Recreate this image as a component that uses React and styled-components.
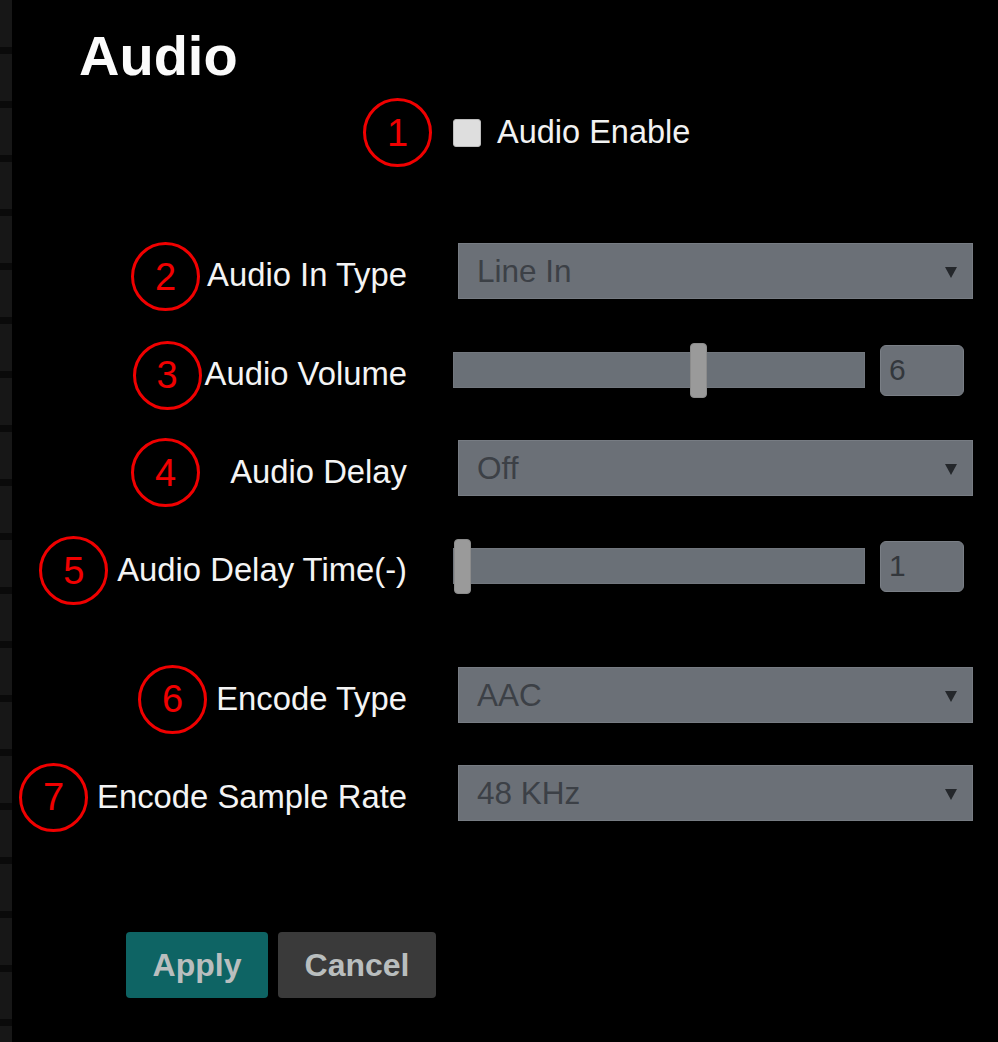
import React from "react";
import styled, { createGlobalStyle } from "styled-components";

const Global = createGlobalStyle`
  html, body { margin: 0; padding: 0; background: #000; }
  * { box-sizing: border-box; }
`;

const Page = styled.div`
  width: 998px;
  height: 1042px;
  overflow: hidden;
  padding-top: 28px;
  background:
    repeating-linear-gradient(to bottom, #171717 0 47px, #0a0a0a 47px 54px) 0 0 / 12px 100% no-repeat,
    #000;
  font-family: "Liberation Sans", Arial, sans-serif;
  color: #f2f2f2;
`;

const Title = styled.h1`
  margin: 0 0 0 79px;
  font-size: 56px;
  line-height: 56px;
  font-weight: 700;
  color: #fbfbfb;
`;

const EnableRow = styled.div`
  display: flex;
  align-items: center;
  height: 69px;
  margin-top: 14px;
  padding-left: 363px;
`;

const Marker = styled.div`
  flex: none;
  width: 69px;
  height: 69px;
  border: 3px solid #f00000;
  border-radius: 50%;
  display: flex;
  align-items: center;
  justify-content: center;
  color: #f00000;
  font-size: 38px;
  line-height: 1;
  margin-top: ${(p) => p.$dy || 0}px;
`;

const Checkbox = styled.span`
  display: inline-block;
  width: 28px;
  height: 28px;
  margin-left: 21px;
  background: #dedede;
  border: 1px solid #bdbdbd;
  border-radius: 3px;
`;

const EnableText = styled.span`
  margin-left: 16px;
  font-size: 32.5px;
`;

const Row = styled.div`
  display: flex;
  align-items: center;
  height: 56px;
  margin-top: ${(p) => p.$mt}px;
`;

const LabelCell = styled.div`
  flex: none;
  width: 407px;
  height: 56px;
  padding-top: 8px;
  display: flex;
  align-items: center;
  justify-content: flex-end;
  gap: ${(p) => p.$gap}px;
`;

const LabelText = styled.span`
  font-size: 32.8px;
  white-space: nowrap;
  color: #f4f4f4;
`;

const Select = styled.div`
  margin-left: 51px;
  width: 515px;
  height: 56px;
  background: #6b7077;
  border: 1px solid #777c83;
  display: flex;
  align-items: center;
  justify-content: space-between;
  padding: 0 15px 0 18px;
  font-size: 31.5px;
  color: #3c4046;
`;

const Arrow = styled.span`
  width: 0;
  height: 0;
  margin-top: 2px;
  border-left: 6px solid transparent;
  border-right: 6px solid transparent;
  border-top: 11px solid #24272b;
`;

const SliderWrap = styled.div`
  margin-left: 46px;
  width: 412px;
  height: 56px;
  position: relative;
  display: flex;
  align-items: center;
`;

const Track = styled.div`
  width: 100%;
  height: 36px;
  background: #6a7077;
  border: 1px solid #72777e;
`;

const Thumb = styled.div`
  position: absolute;
  top: 1px;
  width: 17px;
  height: 55px;
  background: #9a9a9a;
  border: 1px solid #8b8b8b;
  border-radius: 4px;
`;

const ValueBox = styled.div`
  margin-left: 15px;
  width: 84px;
  height: 51px;
  background: #6b7077;
  border: 1px solid #7a7f86;
  border-radius: 6px;
  display: flex;
  align-items: center;
  padding-left: 8px;
  font-size: 30px;
  color: #33373c;
`;

const ButtonRow = styled.div`
  display: flex;
  gap: 10px;
  margin-top: 111px;
  padding-left: 126px;
`;

const Button = styled.button`
  height: 66px;
  width: ${(p) => p.$w}px;
  border: none;
  border-radius: 4px;
  background: ${(p) => (p.$primary ? "#0e6464" : "#3a3a3a")};
  color: #b9bebe;
  font-family: "Liberation Sans", Arial, sans-serif;
  font-weight: 700;
  font-size: 32px;
  padding: 0;
`;

function Slider({ value, min, max }) {
  const frac = (value - min) / (max - min);
  const left = 1 + frac * (412 - 17 - 1);
  return (
    <SliderWrap>
      <Track />
      <Thumb style={{ left: `${left}px` }} />
    </SliderWrap>
  );
}

function Label({ n, text, gap = 8, dy = 2 }) {
  return (
    <LabelCell $gap={gap}>
      <Marker $dy={dy}>{n}</Marker>
      <LabelText>{text}</LabelText>
    </LabelCell>
  );
}

export default function App() {
  return (
    <>
      <Global />
      <Page>
        <Title>Audio</Title>
        <EnableRow>
          <Marker>1</Marker>
          <Checkbox />
          <EnableText>Audio Enable</EnableText>
        </EnableRow>

        <Row $mt={76}>
          <Label n="2" text="Audio In Type" gap={7} dy={3} />
          <Select>
            <span>Line In</span>
            <Arrow />
          </Select>
        </Row>

        <Row $mt={43}>
          <Label n="3" text="Audio Volume" gap={3} dy={2} />
          <Slider value={6} min={0} max={10} />
          <ValueBox>6</ValueBox>
        </Row>

        <Row $mt={42}>
          <Label n="4" text="Audio Delay" gap={30} dy={1} />
          <Select>
            <span>Off</span>
            <Arrow />
          </Select>
        </Row>

        <Row $mt={42}>
          <Label n="5" text="Audio Delay Time(-)" gap={9} dy={1} />
          <Slider value={1} min={1} max={10} />
          <ValueBox>1</ValueBox>
        </Row>

        <Row $mt={73}>
          <Label n="6" text="Encode Type" gap={9} dy={0} />
          <Select>
            <span>AAC</span>
            <Arrow />
          </Select>
        </Row>

        <Row $mt={42}>
          <Label n="7" text="Encode Sample Rate" gap={9} dy={0} />
          <Select>
            <span>48 KHz</span>
            <Arrow />
          </Select>
        </Row>

        <ButtonRow>
          <Button $primary $w={142}>Apply</Button>
          <Button $w={158}>Cancel</Button>
        </ButtonRow>
      </Page>
    </>
  );
}
